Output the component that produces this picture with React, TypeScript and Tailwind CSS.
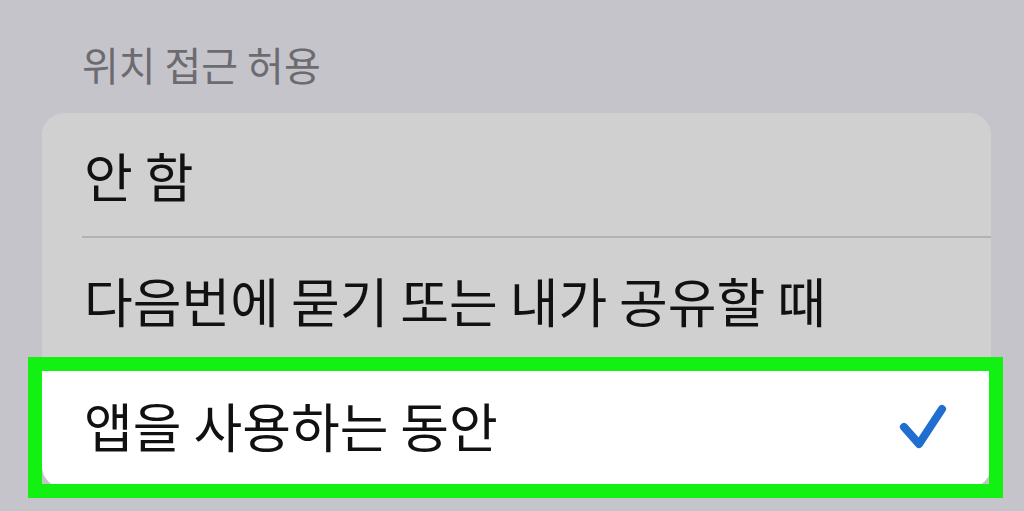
import { type ReactNode } from "react";

const font = { fontFamily: '"Noto Sans CJK KR", "Noto Sans", sans-serif' };

function Row({
  children,
  selected = false,
  divider = false,
}: {
  children: ReactNode;
  selected?: boolean;
  divider?: boolean;
}) {
  return (
    <div
      className={
        selected
          ? "relative flex h-[125px] items-center rounded-b-[22px] bg-white pl-[42px] pr-[41px]"
          : "relative flex h-[125px] items-center pl-[42px] pr-[41px]"
      }
    >
      <span className="text-[53px] leading-none text-[#111]">{children}</span>
      {selected && (
        <svg
          viewBox="0 0 54 54"
          className="ml-auto mt-[3px] h-[54px] w-[54px]"
          fill="none"
          stroke="#1f6ed0"
          strokeWidth={8}
          strokeLinecap="round"
          strokeLinejoin="round"
        >
          <path d="M8 27 L23 44 L46 9" />
        </svg>
      )}
      {divider && (
        <div className="absolute bottom-0 left-[40px] right-0 h-[2px] bg-[#b3b3b5]" />
      )}
      {selected && (
        <div className="pointer-events-none absolute -bottom-[10px] -left-[14px] -right-[12px] -top-[6px] border-[14px] border-[#12f112]" />
      )}
    </div>
  );
}

export default function App() {
  return (
    <div className="h-[511px] w-[1024px] overflow-hidden bg-[#c6c4cb]" style={font}>
      <div className="pl-[42px] pr-[33px] pt-[44px]">
        <h2 className="pl-[40px] text-[40px] leading-none font-normal text-[#6c6b70]">
          위치 접근 허용
        </h2>
        <div className="mt-[29px] rounded-[22px] bg-[#d0d0d0]">
          <Row divider>안 함</Row>
          <Row>다음번에 묻기 또는 내가 공유할 때</Row>
          <Row selected>앱을 사용하는 동안</Row>
        </div>
      </div>
    </div>
  );
}
